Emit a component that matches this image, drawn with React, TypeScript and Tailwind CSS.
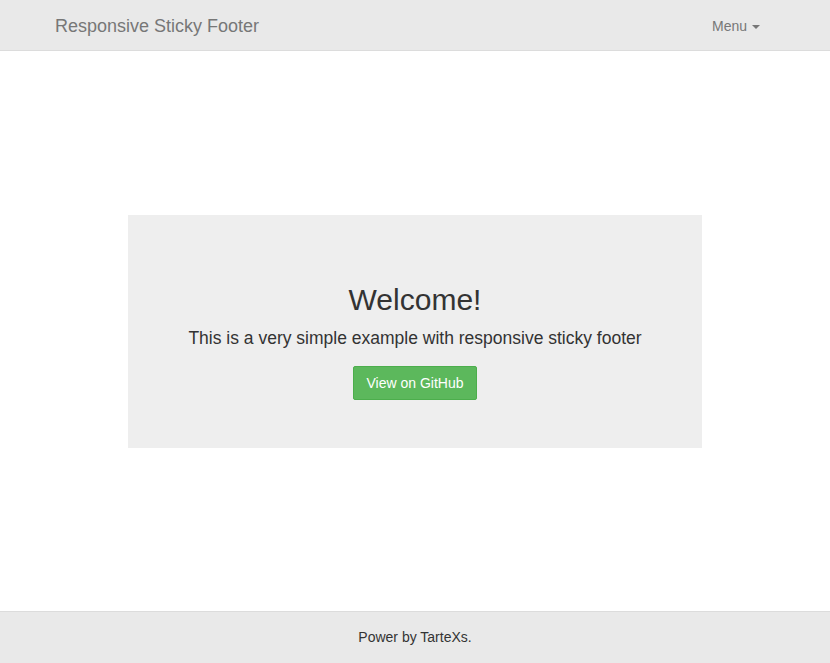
export default function App() {
  return (
    <div className="flex min-h-screen flex-col bg-white font-['Liberation_Sans',Arial,sans-serif] text-[14px] text-[#333]">
      <nav className="h-[51px] shrink-0 border-b border-[#dcdcdc] bg-[#e9e9e9]">
        <div className="mx-auto flex h-[50px] w-[750px] items-center justify-between px-[15px] pt-[2px]">
          <a className="text-[18px] leading-[20px] text-[#777]">Responsive Sticky Footer</a>
          <a className="flex items-center pr-[15px] text-[14px] text-[#777]">
            Menu
            <span className="ml-[5px] mt-[1px] inline-block h-0 w-0 border-x-[4px] border-t-[4px] border-x-transparent border-t-[#777]" />
          </a>
        </div>
      </nav>

      <main className="flex flex-1 items-center justify-center">
        <div className="flex h-[233px] w-[574px] flex-col items-center bg-[#eeeeee] pt-[67px] text-center">
          <h1 className="text-[30px] leading-[36px] text-[#333]">Welcome!</h1>
          <p className="mt-[7px] text-[17.5px] leading-[26px] text-[#333]">
            This is a very simple example with responsive sticky footer
          </p>
          <a className="mt-[15px] inline-block h-[34px] rounded-[2px] border border-[#4cae4c] bg-[#5cb85c] px-[12px] text-[14px] leading-[32px] text-white">
            View on GitHub
          </a>
        </div>
      </main>

      <footer className="flex h-[52px] shrink-0 items-center justify-center border-t border-[#dcdcdc] bg-[#e9e9e9]">
        <p className="text-[14px] text-[#333]">Power by TarteXs.</p>
      </footer>
    </div>
  );
}
